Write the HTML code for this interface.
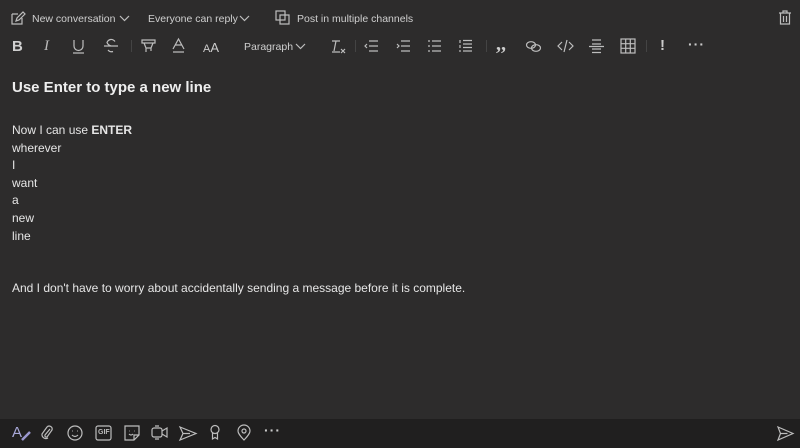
<!DOCTYPE html>
<html><head><meta charset="utf-8"><style>
*{margin:0;padding:0;box-sizing:border-box}
body{width:800px;height:448px;background:#2d2c2c;font-family:"Liberation Sans",sans-serif;color:#d6d6d6;position:relative;overflow:hidden}
.a{position:absolute}
.t{font-size:10.5px;color:#cfcfcf;white-space:nowrap}
svg{position:absolute;overflow:visible}
svg *{fill:none;stroke:#bdbdbd;stroke-width:1.2}
.body{position:absolute;left:12px;top:122px;font-size:12px;line-height:17.6px;color:#e6e6e6}
.bot{position:absolute;left:0;top:419px;width:800px;height:29px;background:#201f1f}
</style></head><body>
<!-- top row -->
<svg style="left:11px;top:11px" width="14" height="14"><path d="M1 3h6M1 3v10h10V7"/><path d="M5 10l1-3 6-6 2 2-6 6z"/></svg>
<div class="a t" style="left:32px;top:13px">New conversation</div>
<svg style="left:120px;top:16px" width="9" height="6"><path d="M0 0l4.5 4.5L9 0"/></svg>
<div class="a t" style="left:148px;top:13px">Everyone can reply</div>
<svg style="left:240px;top:16px" width="9" height="6"><path d="M0 0l4.5 4.5L9 0"/></svg>
<svg style="left:276px;top:11px" width="14" height="14"><rect x="0" y="0" width="9" height="9"/><path d="M4 4h9v9H4z"/></svg>
<div class="a t" style="left:297px;top:13px">Post in multiple channels</div>
<svg style="left:779px;top:10px" width="12" height="15"><path d="M0 3h12M4 3V1h4v2M1.5 3v11h9V3M4.5 6v6M7.5 6v6"/></svg>
<!-- format toolbar -->
<div class="a" style="left:12px;top:38px;font-weight:bold;font-size:15px;color:#cfcfcf">B</div>
<div class="a" style="left:44px;top:38px;font-style:italic;font-size:15px;color:#bbb;font-family:'Liberation Serif',serif">I</div>
<svg style="left:73px;top:40px" width="11" height="14"><path d="M1 0v6a4.5 4.5 0 0 0 9 0V0M0 13h11"/></svg>
<svg style="left:104px;top:39px" width="14" height="14"><path d="M0 7h14M11 2.5Q9 0 6.5 0.5T3 3.5q1 2.5 4 3.5M4 11q2 2.5 5 1.5"/></svg>
<div class="a" style="left:131px;top:40px;width:1px;height:12px;background:#444"></div>
<svg style="left:142px;top:40px" width="13" height="13"><path d="M0 0h13v3H0zM2 3l2 5h5l2-5M4 8v4M9 8v3"/></svg>
<svg style="left:173px;top:39px" width="11" height="14"><path d="M0 10L5.5 0 11 10M2.5 6h6M0 13h11"/></svg>
<div class="a" style="left:203px;top:40px;font-size:11px;color:#ccc">A<span style="font-size:13px">A</span></div>
<div class="a t" style="left:244px;top:41px;font-size:10.5px">Paragraph</div>
<svg style="left:296px;top:44px" width="9" height="6"><path d="M0 0l4.5 4.5L9 0"/></svg>
<svg style="left:331px;top:40px" width="14" height="14"><path d="M1 1h8M5 1l-2 10M1 12h8M10 9l4 4M14 9l-4 4"/></svg>
<div class="a" style="left:355px;top:40px;width:1px;height:12px;background:#444"></div>
<svg style="left:364px;top:41px" width="14" height="11"><path d="M5 0h9M5 5h9M5 10h9M3 3L1 5l2 2"/></svg>
<svg style="left:396px;top:41px" width="14" height="11"><path d="M5 0h9M5 5h9M5 10h9M1 3l2 2-2 2"/></svg>
<svg style="left:428px;top:41px" width="13" height="11"><path d="M0 0h2M0 5h2M0 10h2M4 0h9M4 5h9M4 10h9"/></svg>
<svg style="left:459px;top:40px" width="13" height="12"><path d="M1 0v3M1 5v3M1 10v2M4 0.5h9M4 4h9M4 7.5h9M4 11h9"/></svg>
<div class="a" style="left:486px;top:40px;width:1px;height:12px;background:#444"></div>
<div class="a" style="left:496px;top:33px;font-size:20px;font-weight:bold;color:#ccc;font-family:'Liberation Serif',serif">,,</div>
<svg style="left:526px;top:41px" width="15" height="11"><ellipse cx="5" cy="4" rx="4.5" ry="3.3"/><ellipse cx="10" cy="7" rx="4.5" ry="3.3"/></svg>
<svg style="left:558px;top:40px" width="15" height="12"><path d="M4 2L0 6l4 4M11 2l4 4-4 4M9 0L6 12"/></svg>
<svg style="left:589px;top:40px" width="15" height="13"><path d="M3 0h9M0 6.5h15M3 4h9M3 9h9M3 12.5h9"/></svg>
<svg style="left:621px;top:39px" width="14" height="14"><rect x="0" y="0" width="14" height="14"/><path d="M4.7 0v14M9.3 0v14M0 4.7h14M0 9.3h14"/></svg>
<div class="a" style="left:646px;top:40px;width:1px;height:12px;background:#444"></div>
<div class="a" style="left:660px;top:37px;font-size:15px;font-weight:bold;color:#ccc">!</div>
<div class="a" style="left:688px;top:36px;font-size:14px;font-weight:bold;color:#ccc;letter-spacing:1px">···</div>
<!-- content -->
<div class="a" style="left:12px;top:79px;font-size:15px;font-weight:bold;color:#eee">Use Enter to type a new line</div>
<div class="body">Now I can use <b>ENTER</b><br>wherever<br>I<br>want<br>a<br>new<br>line<br><br><br>And I don't have to worry about accidentally sending a message before it is complete.</div>
<!-- bottom -->
<div class="bot"></div>
<div class="a" style="left:12px;top:424px;font-size:15px;color:#a8a8d8">A</div>
<svg style="left:22px;top:432px" width="8" height="8"><path d="M0 8L8 0" style="stroke:#9b98d0;stroke-width:2.5"/></svg>
<svg style="left:41px;top:425px" width="12" height="15"><path d="M9 4l-5 6a1.5 1.5 0 0 0 2 2l5-7a3 3 0 0 0-5-3L1 9a4 4 0 0 0 6 4"/></svg>
<svg style="left:68px;top:426px" width="14" height="14"><circle cx="7" cy="7" r="7"/><path d="M4 9q3 3 6 0"/><path d="M4.5 5h.5M9 5h.5" style="stroke-width:1.8"/></svg>
<svg style="left:96px;top:426px" width="15" height="14"><rect x="0" y="0" width="15" height="14" rx="2"/></svg>
<div class="a" style="left:98px;top:429px;font-size:7px;font-weight:bold;color:#bbb">GIF</div>
<svg style="left:125px;top:426px" width="14" height="14"><path d="M0 0h14v9l-5 5H0z M9 14V9h5"/><path d="M4 5h.5M9 5h.5M4 8q2 2 4 0" /></svg>
<svg style="left:152px;top:426px" width="16" height="14"><rect x="0" y="2" width="10" height="9" rx="2"/><path d="M10 5l5-3v9l-5-3M3 0h4M3 13h4"/></svg>
<svg style="left:180px;top:427px" width="16" height="13"><path d="M0 0l16 6.5L0 13l3-6.5zM3 6.5h7"/></svg>
<svg style="left:210px;top:425px" width="10" height="15"><circle cx="5" cy="4.5" r="4"/><path d="M2.5 8v6l2.5-1.5 2.5 1.5V8"/></svg>
<svg style="left:238px;top:425px" width="12" height="15"><path d="M6 15s-6-6-6-9a6 6 0 0 1 12 0c0 3-6 9-6 9z"/><circle cx="6" cy="6" r="2"/></svg>
<div class="a" style="left:264px;top:422px;font-size:14px;font-weight:bold;color:#ccc;letter-spacing:1px">···</div>
<svg style="left:778px;top:427px" width="15" height="13"><path d="M0 0l15 6.5L0 13l2.5-6.5zM2.5 6.5h7"/></svg>
</body></html>
